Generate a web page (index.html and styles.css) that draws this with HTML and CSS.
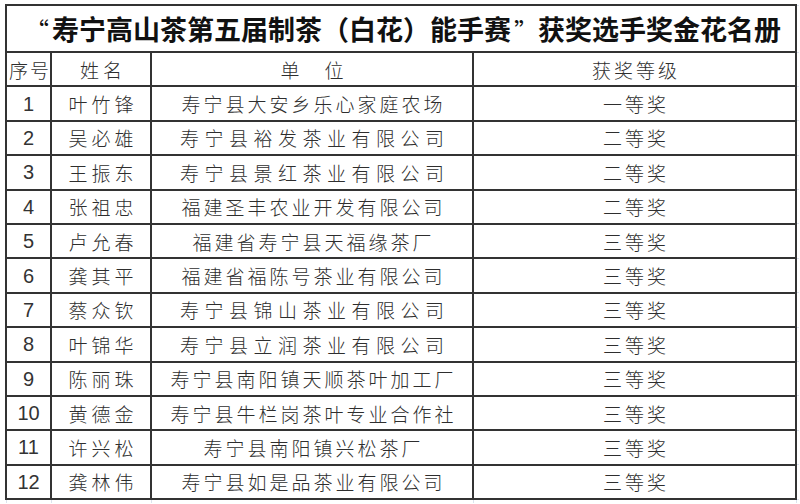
FILE: index.html
```html
<!DOCTYPE html>
<html lang="zh-CN">
<head>
<meta charset="utf-8">
<title>获奖选手奖金花名册</title>
<link rel="stylesheet" href="styles.css">
</head>
<body>
<table class="sheet">
  <colgroup>
    <col class="w-no"><col class="w-name"><col class="w-unit"><col class="w-prize"><col class="w-ghost">
  </colgroup>
  <tr class="title-row">
    <td class="title" colspan="4"><span class="q q-open">“</span>寿宁高山茶第五届制茶（白花）能手赛<span class="q q-close">”</span>获奖选手奖金花名册</td>
    <td class="ghost"></td>
  </tr>
  <tr class="row">
    <td class="hd hd-no">序号</td>
    <td class="hd hd-name">姓名</td>
    <td class="hd">单　位</td>
    <td class="hd">获奖等级</td>
    <td class="ghost"></td>
  </tr>
  <tr class="row"><td class="num">1</td><td class="name">叶竹锋</td><td class="unit">寿宁县大安乡乐心家庭农场</td><td class="prize">一等奖</td><td class="ghost"></td></tr>
  <tr class="row"><td class="num">2</td><td class="name">吴必雄</td><td class="unit wide">寿宁县裕发茶业有限公司</td><td class="prize">二等奖</td><td class="ghost"></td></tr>
  <tr class="row"><td class="num">3</td><td class="name">王振东</td><td class="unit wide">寿宁县景红茶业有限公司</td><td class="prize">二等奖</td><td class="ghost"></td></tr>
  <tr class="row"><td class="num">4</td><td class="name">张祖忠</td><td class="unit">福建圣丰农业开发有限公司</td><td class="prize">二等奖</td><td class="ghost"></td></tr>
  <tr class="row"><td class="num">5</td><td class="name">卢允春</td><td class="unit">福建省寿宁县天福缘茶厂</td><td class="prize">三等奖</td><td class="ghost"></td></tr>
  <tr class="row"><td class="num">6</td><td class="name">龚其平</td><td class="unit">福建省福陈号茶业有限公司</td><td class="prize">三等奖</td><td class="ghost"></td></tr>
  <tr class="row"><td class="num">7</td><td class="name">蔡众钦</td><td class="unit wide">寿宁县锦山茶业有限公司</td><td class="prize">三等奖</td><td class="ghost"></td></tr>
  <tr class="row"><td class="num">8</td><td class="name">叶锦华</td><td class="unit wide">寿宁县立润茶业有限公司</td><td class="prize">三等奖</td><td class="ghost"></td></tr>
  <tr class="row"><td class="num">9</td><td class="name">陈丽珠</td><td class="unit">寿宁县南阳镇天顺茶叶加工厂</td><td class="prize">三等奖</td><td class="ghost"></td></tr>
  <tr class="row"><td class="num">10</td><td class="name">黄德金</td><td class="unit">寿宁县牛栏岗茶叶专业合作社</td><td class="prize">三等奖</td><td class="ghost"></td></tr>
  <tr class="row"><td class="num">11</td><td class="name">许兴松</td><td class="unit">寿宁县南阳镇兴松茶厂</td><td class="prize">三等奖</td><td class="ghost"></td></tr>
  <tr class="row"><td class="num">12</td><td class="name">龚林伟</td><td class="unit">寿宁县如是品茶业有限公司</td><td class="prize">三等奖</td><td class="ghost"></td></tr>
  <tr class="ghost-row">
    <td class="gb"></td><td class="gb"></td><td class="gb"></td><td class="gb"></td><td class="gb gb-end"></td>
  </tr>
</table>
</body>
</html>
```

FILE: styles.css
```css
html, body {
  margin: 0;
  padding: 0;
  background: #ffffff;
}

body {
  font-family: "Noto Sans CJK SC", "Noto Sans", sans-serif;
  color: #2e2e2e;
  overflow: hidden;
}

.sheet {
  margin: 4px 0 0 5px;
  border-collapse: collapse;
  table-layout: fixed;
  width: 793px;
}

.w-no { width: 45px; }
.w-name { width: 100px; }
.w-unit { width: 322px; }
.w-prize { width: 323px; }
.w-ghost { width: 3px; }

.sheet td {
  padding: 0;
  text-align: center;
  vertical-align: middle;
  white-space: nowrap;
  overflow: hidden;
  border: 2px solid #333333;
  line-height: 1;
}

.title-row { height: 47px; }
.row { height: 34.4px; }
.ghost-row { height: 4px; }

.sheet td.title {
  font-size: 27px;
  font-weight: 700;
  color: #111111;
  letter-spacing: 0;
  padding-left: 4px;
}

.q {
  display: inline-block;
  width: 27px;
  font-weight: 400;
  font-size: 24px;
}

.q-open {
  text-align: right;
  padding-right: 3px;
  width: 24px;
}

.q-close {
  text-align: left;
  padding-left: 3px;
  width: 24px;
}

.hd,
.name,
.unit,
.prize {
  font-size: 19px;
  font-weight: 300;
  letter-spacing: 3px;
  padding-left: 3px !important;
}

.hd-no {
  letter-spacing: 2px;
  padding-left: 2px !important;
}

.hd-name,
.name {
  letter-spacing: 4px;
  padding-left: 4px !important;
}

.unit.wide {
  letter-spacing: 5.5px;
  padding-left: 5.5px !important;
}

.num {
  font-family: "Liberation Sans", "Noto Sans CJK SC", sans-serif;
  font-size: 20px;
  color: #333333;
}

.sheet td.ghost {
  border-top: 1px solid #dce3ee;
  border-bottom: 1px solid #dce3ee;
  border-right: none;
}

.sheet td.gb {
  border-top: 2px solid #333333;
  border-bottom: none;
  border-right: none;
  border-left: 1px solid #dce3ee;
}

.sheet td.gb-end {
  border-top: none;
}
```
